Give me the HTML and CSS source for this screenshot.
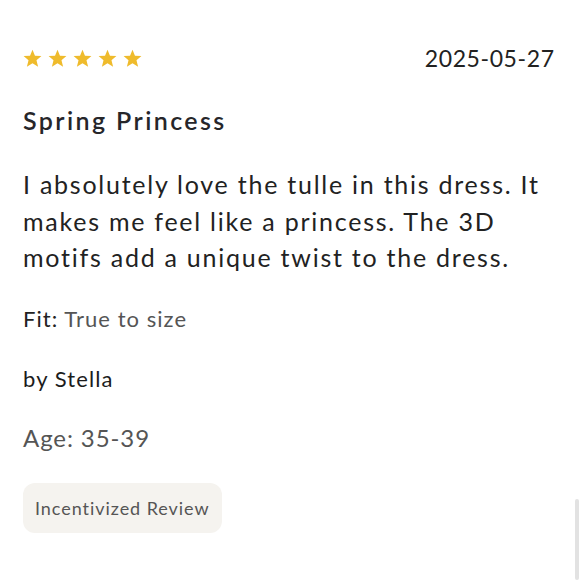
FILE: index.html
```html
<!DOCTYPE html>
<html lang="en">
<head>
<meta charset="utf-8">
<title>Review</title>
<link rel="stylesheet" href="styles.css">
</head>
<body>
<article class="review">
  <div class="review-head">
    <div class="stars" aria-label="5 out of 5 stars">
      <svg class="star" viewBox="0 0 20 20"><polygon points="10,0.8 12.6,7 19.4,7.4 14.2,11.8 15.9,18.6 10,14.9 4.1,18.6 5.8,11.8 0.6,7.4 7.4,7"/></svg>
      <svg class="star" viewBox="0 0 20 20"><polygon points="10,0.8 12.6,7 19.4,7.4 14.2,11.8 15.9,18.6 10,14.9 4.1,18.6 5.8,11.8 0.6,7.4 7.4,7"/></svg>
      <svg class="star" viewBox="0 0 20 20"><polygon points="10,0.8 12.6,7 19.4,7.4 14.2,11.8 15.9,18.6 10,14.9 4.1,18.6 5.8,11.8 0.6,7.4 7.4,7"/></svg>
      <svg class="star" viewBox="0 0 20 20"><polygon points="10,0.8 12.6,7 19.4,7.4 14.2,11.8 15.9,18.6 10,14.9 4.1,18.6 5.8,11.8 0.6,7.4 7.4,7"/></svg>
      <svg class="star" viewBox="0 0 20 20"><polygon points="10,0.8 12.6,7 19.4,7.4 14.2,11.8 15.9,18.6 10,14.9 4.1,18.6 5.8,11.8 0.6,7.4 7.4,7"/></svg>
    </div>
    <span class="date">2025-05-27</span>
  </div>
  <h2 class="title">Spring Princess</h2>
  <p class="body-text">I absolutely love the tulle in this dress. It makes me feel like a princess. The 3D motifs add a unique twist to the dress.</p>
  <p class="fit"><span class="fit-label">Fit:</span> True to size</p>
  <p class="author">by Stella</p>
  <p class="age">Age: 35-39</p>
  <span class="badge">Incentivized Review</span>
</article>
<div class="scroll-indicator"></div>
</body>
</html>
```
FILE: styles.css
```css
html, body {
  margin: 0;
  padding: 0;
  background: #ffffff;
}
body {
  font-family: Lato, "Open Sans", sans-serif;
  color: #222222;
  width: 580px;
  height: 580px;
  overflow: hidden;
  position: relative;
}
.review {
  display: flex;
  flex-direction: column;
  align-items: flex-start;
  padding: 48px 26px 0 23px;
}
.review-head {
  align-self: stretch;
  display: flex;
  justify-content: space-between;
  align-items: center;
  height: 20px;
}
.stars {
  display: flex;
  gap: 6px;
}
.star {
  width: 19px;
  height: 19px;
  fill: #EFBB2C;
}
.date {
  font-size: 23px;
  line-height: 20px;
  letter-spacing: 0.6px;
  margin-right: -0.6px;
  color: #222222;
}
.title {
  margin: 37px 0 0;
  font-size: 25px;
  line-height: 30px;
  font-weight: 600;
  letter-spacing: 2.4px;
  color: #26262a;
}
.body-text {
  margin: 31px 0 0;
  font-size: 25px;
  line-height: 36.5px;
  letter-spacing: 1.75px;
  color: #222222;
}
.fit {
  margin: 30px 0 0;
  font-size: 22px;
  line-height: 26px;
  letter-spacing: 1.05px;
  color: #555555;
}
.fit-label {
  color: #222222;
}
.author {
  margin: 34px 0 0;
  font-size: 22px;
  line-height: 26px;
  letter-spacing: 1.1px;
  color: #1c1c1c;
}
.age {
  margin: 32px 0 0;
  font-size: 24px;
  line-height: 28px;
  letter-spacing: 0.9px;
  color: #555555;
}
.badge {
  margin-top: 31px;
  display: inline-flex;
  align-items: center;
  height: 50px;
  box-sizing: border-box;
  padding: 0 12px;
  background: #F5F3EF;
  border-radius: 12px;
  font-size: 18px;
  letter-spacing: 0.95px;
  color: #555555;
}
.scroll-indicator {
  position: absolute;
  right: 1px;
  top: 499px;
  width: 4px;
  height: 81px;
  background: #E2E2E2;
  border-radius: 2px;
}
```
